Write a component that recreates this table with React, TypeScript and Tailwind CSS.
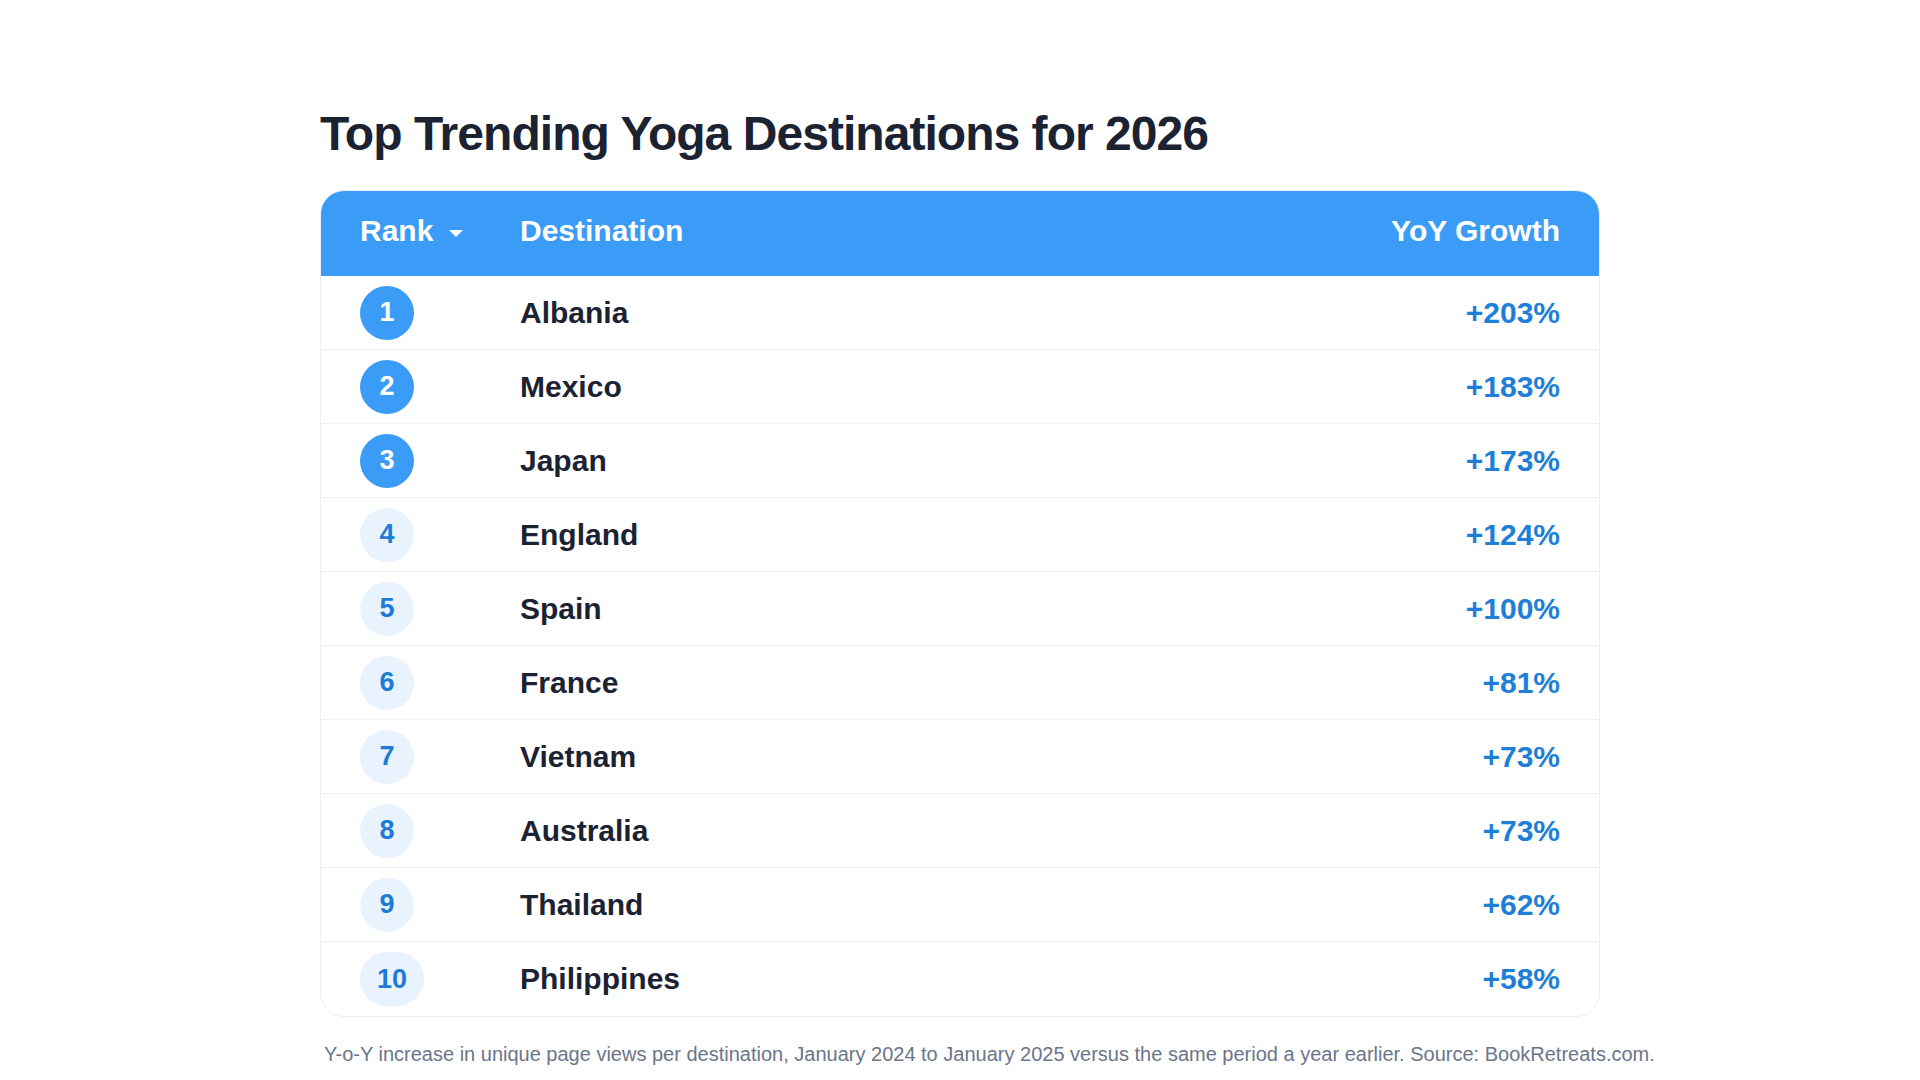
const rows = [
    { rank: 1, name: 'Albania', growth: '+203%' },
    { rank: 2, name: 'Mexico', growth: '+183%' },
    { rank: 3, name: 'Japan', growth: '+173%' },
    { rank: 4, name: 'England', growth: '+124%' },
    { rank: 5, name: 'Spain', growth: '+100%' },
    { rank: 6, name: 'France', growth: '+81%' },
    { rank: 7, name: 'Vietnam', growth: '+73%' },
    { rank: 8, name: 'Australia', growth: '+73%' },
    { rank: 9, name: 'Thailand', growth: '+62%' },
    { rank: 10, name: 'Philippines', growth: '+58%' },
];

const RankBadge = ({ rank }: { rank: number }) => {
    const top = rank <= 3;
    return (
        <span
            className={
                top
                    ? 'inline-flex h-[54px] min-w-[54px] items-center justify-center rounded-full bg-[#3b9cf7] px-[17px] text-[27px] font-bold text-white'
                    : 'inline-flex h-[54px] min-w-[54px] items-center justify-center rounded-full bg-[#e8f3fe] px-[17px] text-[27px] font-bold text-[#1e7bd6]'
            }
        >
            {rank}
        </span>
    );
};

export default function App() {
    return (
        <div className="min-h-screen bg-white pt-[110px]" style={{ fontFamily: '"Liberation Sans", Arial, sans-serif' }}>
            <div className="mx-auto w-[1280px]">
                <h1 className="text-5xl leading-none font-bold tracking-[-0.02em] text-[#1b2232]">
                    Top Trending Yoga Destinations for 2026
                </h1>

                {/* Table */}
                <div className="mt-8 overflow-hidden rounded-[24px] border border-[#eceef3]">
                    <div className="grid h-[85px] grid-cols-[160px_1fr_auto] bg-[#3b9cf7] px-[39px] pt-[22px] text-3xl font-bold text-white">
                        <div className="flex items-start">
                            <span>Rank</span>
                            <svg width="14" height="7" viewBox="0 0 14 7" className="ml-[16px] mt-[17px]">
                                <polygon points="0,0 14,0 7,7" fill="currentColor" />
                            </svg>
                        </div>
                        <div>Destination</div>
                        <div className="text-right">YoY Growth</div>
                    </div>

                    {rows.map((r) => (
                        <div
                            key={r.rank}
                            className="grid h-[74px] grid-cols-[160px_1fr_auto] items-center border-b border-[#eef0f5] px-[39px] last:border-b-0"
                        >
                            <div className="flex items-center">
                                <RankBadge rank={r.rank} />
                            </div>
                            <div className="text-3xl font-bold text-[#1b2232]">{r.name}</div>
                            <div className="text-right text-3xl font-bold text-[#1e7fd8]">{r.growth}</div>
                        </div>
                    ))}
                </div>

                <p className="mt-[23px] whitespace-nowrap pl-1 text-xl text-[#6b7589]">
                    Y-o-Y increase in unique page views per destination, January 2024 to January 2025 versus the same period a year earlier. Source: BookRetreats.com.
                </p>
            </div>
        </div>
    );
}
